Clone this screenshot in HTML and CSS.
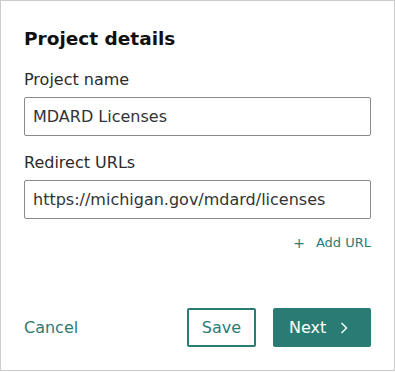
FILE: index.html
```html
<!DOCTYPE html>
<html>
<head>
<meta charset="utf-8">
<link rel="stylesheet" href="styles.css">
</head>
<body>
<div class="card">
  <h1 class="title">Project details</h1>
  <div class="field">
    <label class="label">Project name</label>
    <div class="input">MDARD Licenses</div>
  </div>
  <div class="field">
    <label class="label">Redirect URLs</label>
    <div class="input">https://michigan.gov/mdard/licenses</div>
  </div>
  <div class="add-row">
    <span class="add"><span class="plus">+</span>Add URL</span>
  </div>
  <div class="actions">
    <span class="cancel">Cancel</span>
    <div class="btns">
      <span class="btn btn-outline">Save</span>
      <span class="btn btn-primary">Next<svg class="chev" width="8" height="12" viewBox="0 0 8 12"><path d="M1.5 1 L6.5 6 L1.5 11" fill="none" stroke="#fff" stroke-width="1.4"/></svg></span>
    </div>
  </div>
</div>
</body>
</html>
```
FILE: styles.css
```css
* { box-sizing: border-box; }
html, body { margin: 0; padding: 0; background: #fff; }
body { font-family: "DejaVu Sans", sans-serif; color: #1a1a1a; }
.card {
  width: 395px;
  height: 371px;
  border: 1px solid #cccccc;
  padding: 26px 23px 0 23px;
  display: flex;
  flex-direction: column;
}
.title {
  margin: 0;
  font-size: 18.5px;
  font-weight: 700;
  line-height: 24px;
  color: #111;
}
.field { display: flex; flex-direction: column; margin-top: 19px; }
.field + .field { margin-top: 17px; }
.label { font-size: 16px; line-height: 20px; color: #2b2b2b; margin-bottom: 7px; }
.input {
  height: 39px;
  border: 1px solid #8a8a8a;
  border-radius: 2px;
  padding: 0 8px;
  display: flex;
  align-items: center;
  font-size: 16px;
  color: #333;
}
.add-row { display: flex; justify-content: flex-end; margin-top: 15px; }
.add { font-size: 13px; color: #2a7b73; line-height: 18px; display: flex; align-items: center; }
.plus { font-size: 14px; margin-right: 11px; }
.actions {
  margin-top: 56px;
  display: flex;
  align-items: center;
  justify-content: space-between;
}
.cancel { font-size: 16px; color: #2a7b73; }
.btns { display: flex; gap: 17px; }
.btn {
  height: 39px;
  display: flex;
  align-items: center;
  font-size: 16px;
  border-radius: 2px;
}
.btn-outline { width: 69px; justify-content: center; border: 2px solid #2a7b73; color: #2a7b73; }
.btn-primary { width: 98px; padding-left: 16px; background: #2a7b73; color: #fff; }
.chev { margin-left: 14px; }
```
